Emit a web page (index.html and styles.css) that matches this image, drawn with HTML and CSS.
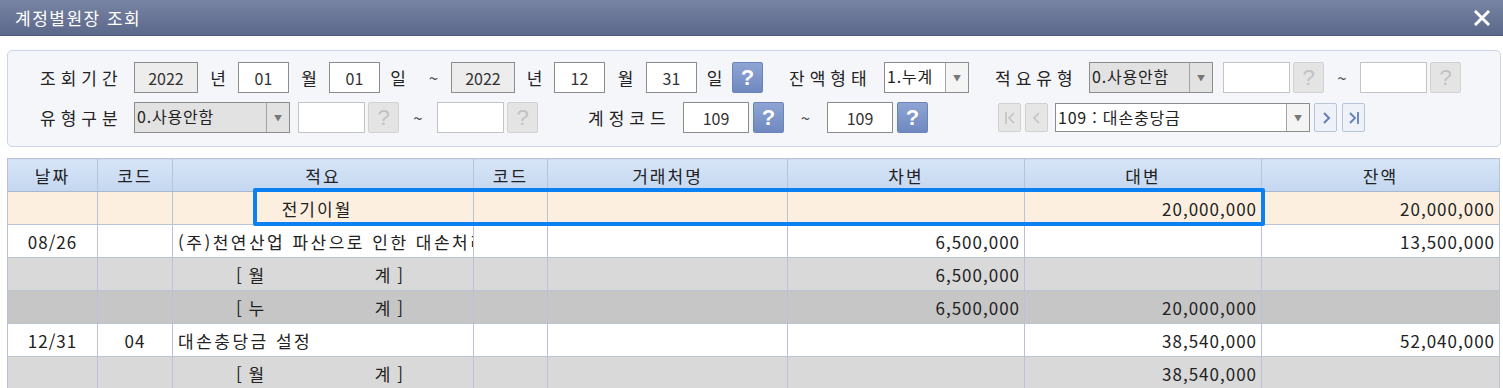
FILE: index.html
```html
<!DOCTYPE html>
<html lang="ko">
<head>
    <meta charset="UTF-8">
    <title>계정별원장 조회</title>
    <link rel="stylesheet" href="styles.css">
</head>
<body>
    <div class="titlebar">
        <span class="title">계정별원장 조회</span>
        <svg class="close" width="16" height="16" viewBox="0 0 16 16">
            <path d="M2 2 L14 14 M14 2 L2 14" stroke="#fff" stroke-width="3" stroke-linecap="square"/>
        </svg>
    </div>

    <div class="search">
        <div class="row">
            <span class="lbl">조회기간</span>
            <span class="box gray w64">2022</span>
            <span class="unit w40">년</span>
            <span class="box w51">01</span>
            <span class="unit w40">월</span>
            <span class="box w51">01</span>
            <span class="unit w36">일</span>
            <span class="unit w35 tilde">~</span>
            <span class="box gray w64">2022</span>
            <span class="unit w39">년</span>
            <span class="box w51">12</span>
            <span class="unit w41">월</span>
            <span class="box w51">31</span>
            <span class="unit w35">일</span>
            <span class="qbtn">?</span>
            <span class="lbl2 ml26">잔액형태</span>
            <span class="select w85"><span class="sel-text">1.누계</span><span class="arrow">▼</span></span>
            <span class="lbl2 ml26 w94">적요유형</span>
            <span class="select dis w124"><span class="sel-text">0.사용안함</span><span class="arrow">▼</span></span>
            <span class="box dis w67 ml10"></span>
            <span class="qbtn dis ml3">?</span>
            <span class="unit w36 tilde">~</span>
            <span class="box dis w67"></span>
            <span class="qbtn dis ml3">?</span>
        </div>
        <div class="row">
            <span class="lbl">유형구분</span>
            <span class="select dis w156"><span class="sel-text">0.사용안함</span><span class="arrow">▼</span></span>
            <span class="box dis w67 ml8"></span>
            <span class="qbtn dis ml3">?</span>
            <span class="unit w38 tilde">~</span>
            <span class="box dis w67"></span>
            <span class="qbtn dis ml3">?</span>
            <span class="lbl2 ml50">계정코드</span>
            <span class="box w66">109</span>
            <span class="qbtn ml4">?</span>
            <span class="unit w43 tilde">~</span>
            <span class="box w66">109</span>
            <span class="qbtn ml4">?</span>

            <span class="nav off ml70">
                <svg width="12" height="14" viewBox="0 0 12 14"><path d="M2 1 V13 M10 2 L5 7 L10 12" fill="none" stroke="#c2c2c2" stroke-width="1.6"/></svg>
            </span>
            <span class="nav off ml4">
                <svg width="12" height="14" viewBox="0 0 12 14"><path d="M8 2 L3 7 L8 12" fill="none" stroke="#c2c2c2" stroke-width="1.6"/></svg>
            </span>
            <span class="select combo w255 ml7"><span class="sel-text">109 : 대손충당금</span><span class="arrow">▼</span></span>
            <span class="nav on ml4">
                <svg width="12" height="14" viewBox="0 0 12 14"><path d="M4 2 L9 7 L4 12" fill="none" stroke="#5f7fc0" stroke-width="2"/></svg>
            </span>
            <span class="nav on ml5">
                <svg width="12" height="14" viewBox="0 0 12 14"><path d="M2 2 L7 7 L2 12 M10 1 V13" fill="none" stroke="#5f7fc0" stroke-width="1.8"/></svg>
            </span>
        </div>
    </div>

    <div class="grid-wrap">
        <table class="ledger">
            <colgroup>
                <col style="width:90px"><col style="width:75px"><col style="width:301px"><col style="width:74px">
                <col style="width:240px"><col style="width:237px"><col style="width:237px"><col style="width:238px">
            </colgroup>
            <thead>
                <tr>
                    <th>날짜</th><th>코드</th><th>적요</th><th>코드</th><th>거래처명</th><th>차변</th><th>대변</th><th>잔액</th>
                </tr>
            </thead>
            <tbody>
                <tr class="carry">
                    <td></td><td></td><td class="center carry-text">전기이월</td><td></td><td></td>
                    <td class="num"></td><td class="num">20,000,000</td><td class="num">20,000,000</td>
                </tr>
                <tr>
                    <td class="center">08/26</td><td></td><td class="memo">(주)천연산업 파산으로 인한 대손처리</td><td></td><td></td>
                    <td class="num">6,500,000</td><td class="num"></td><td class="num">13,500,000</td>
                </tr>
                <tr class="month">
                    <td></td><td></td><td class="center"><span class="sum"><span>[ 월</span><span>계 ]</span></span></td><td></td><td></td>
                    <td class="num">6,500,000</td><td class="num"></td><td class="num"></td>
                </tr>
                <tr class="total">
                    <td></td><td></td><td class="center"><span class="sum"><span>[ 누</span><span>계 ]</span></span></td><td></td><td></td>
                    <td class="num">6,500,000</td><td class="num">20,000,000</td><td class="num"></td>
                </tr>
                <tr>
                    <td class="center">12/31</td><td class="center">04</td><td class="memo">대손충당금 설정</td><td></td><td></td>
                    <td class="num"></td><td class="num">38,540,000</td><td class="num">52,040,000</td>
                </tr>
                <tr class="month">
                    <td></td><td></td><td class="center"><span class="sum"><span>[ 월</span><span>계 ]</span></span></td><td></td><td></td>
                    <td class="num"></td><td class="num">38,540,000</td><td class="num"></td>
                </tr>
            </tbody>
        </table>
        <div class="focus-box"></div>
    </div>
</body>
</html>
```

FILE: styles.css
```css
body {
    margin: 0;
    width: 1503px;
    height: 388px;
    overflow: hidden;
    background: #fff;
    color: #222;
    font-family: "Noto Sans CJK KR", "Noto Sans", sans-serif;
}
.titlebar {
    height: 36px;
    display: flex;
    align-items: center;
    justify-content: space-between;
    padding: 0 13px 0 15px;
    background: linear-gradient(#7884a3, #5c688a);
    border-bottom: 1px solid #4f5a79;
    box-sizing: border-box;
    color: #fff;
}
.title {
    font-size: 17px;
    letter-spacing: 1.5px;
}
.close {
    display: block;
}

/* search panel */
.search {
    margin: 14px 2px 0 7px;
    height: 97px;
    box-sizing: border-box;
    padding: 11px 0 0 32px;
    border: 1px solid #c9d6ea;
    border-radius: 5px;
    background: #f4f6fa;
}
.row {
    display: flex;
    align-items: center;
    height: 31px;
}
.row + .row {
    margin-top: 9px;
}
.lbl {
    width: 94px;
    font-size: 17px;
    letter-spacing: 5px;
    color: #222;
}
.lbl2 {
    width: 95px;
    font-size: 17px;
    letter-spacing: 5px;
    color: #222;
}
.unit {
    text-align: center;
    font-size: 17px;
}
.tilde {
    font-size: 17px;
    color: #444;
}
.box {
    height: 31px;
    box-sizing: border-box;
    border: 1px solid #8c8c8c;
    background: #fff;
    display: flex;
    align-items: center;
    justify-content: center;
    font-size: 16px;
    color: #333;
}
.box.gray {
    background: #ededed;
}
.box.dis {
    border-color: #c4c4c4;
}
.qbtn {
    width: 31px;
    height: 31px;
    box-sizing: border-box;
    display: flex;
    align-items: center;
    justify-content: center;
    border: 1px solid #6b83b8;
    border-radius: 2px;
    background: linear-gradient(#8ea4d3, #6f89c0);
    color: #fff;
    font-family: "Liberation Sans", sans-serif;
    font-weight: bold;
    font-size: 22px;
}
.qbtn.dis {
    border-color: #d2d2d2;
    background: #e4e4e4;
    color: #c2c2c2;
    font-weight: normal;
}
.select {
    height: 31px;
    box-sizing: border-box;
    display: flex;
    border: 1px solid #8c8c8c;
    background: #fff;
    font-size: 16px;
    color: #222;
}
.select.dis {
    background: #e2e2e2;
}
.select.combo {
    height: 29px;
}
.sel-text {
    flex: 1;
    padding-left: 2px;
    line-height: 27px;
    letter-spacing: 0.8px;
    white-space: nowrap;
}
.arrow {
    width: 22px;
    border-left: 1px solid #a5a5a5;
    display: flex;
    align-items: center;
    justify-content: center;
    font-size: 8px;
    color: #777;
    background: #f4f4f4;
}
.select.dis .arrow {
    background: #e2e2e2;
}
.nav {
    width: 23px;
    height: 29px;
    box-sizing: border-box;
    display: flex;
    align-items: center;
    justify-content: center;
    border-radius: 2px;
}
.nav.off {
    border: 1px solid #d0d0d0;
    background: #e6e6e6;
}
.nav.on {
    border: 1px solid #b7c4da;
    background: #eef1f7;
}

.w35 { width: 35px; }
.w36 { width: 36px; }
.w38 { width: 38px; }
.w39 { width: 39px; }
.w40 { width: 40px; }
.w41 { width: 41px; }
.w43 { width: 43px; }
.w51 { width: 51px; }
.w64 { width: 64px; }
.w66 { width: 66px; }
.w67 { width: 67px; }
.w85 { width: 85px; }
.w94 { width: 94px; }
.w124 { width: 124px; }
.w156 { width: 156px; }
.w255 { width: 255px; }
.ml3 { margin-left: 3px; }
.ml4 { margin-left: 4px; }
.ml5 { margin-left: 5px; }
.ml7 { margin-left: 7px; }
.ml8 { margin-left: 8px; }
.ml10 { margin-left: 10px; }
.ml26 { margin-left: 26px; }
.ml50 { margin-left: 50px; }
.ml70 { margin-left: 70px; }

/* ledger grid */
.grid-wrap {
    position: relative;
    margin: 11px 0 0 7px;
    width: 1493px;
}
.ledger {
    width: 1493px;
    border-collapse: collapse;
    table-layout: fixed;
    font-size: 17px;
    letter-spacing: 1px;
}
.ledger th,
.ledger td {
    height: 32px;
    padding: 0;
    border: 1px solid #b9c3d3;
    white-space: nowrap;
    overflow: hidden;
}
.ledger th {
    background: linear-gradient(#d7e5f7, #c4d7f0);
    font-weight: normal;
    text-align: center;
    letter-spacing: 2px;
    border-bottom-color: #a9b8cf;
}
.ledger td.center {
    text-align: center;
}
.ledger td.memo {
    padding-left: 5px;
    letter-spacing: 2.5px;
    text-overflow: clip;
}
.ledger td.num {
    text-align: right;
    padding-right: 4px;
}
.carry-text {
    padding-right: 12px !important;
    letter-spacing: 2px;
}
.sum {
    display: inline-flex;
    justify-content: space-between;
    width: 168px;
    margin-right: 6px;
}
.ledger tr.carry td {
    background: #fdefdf;
}
.ledger tr.month td {
    background: #d9d9d9;
}
.ledger tr.total td {
    background: #c6c6c6;
}
.focus-box {
    position: absolute;
    left: 246px;
    top: 30px;
    width: 1012px;
    height: 38px;
    box-sizing: border-box;
    border: 4px solid #0b80f3;
    border-radius: 2px;
}
```
